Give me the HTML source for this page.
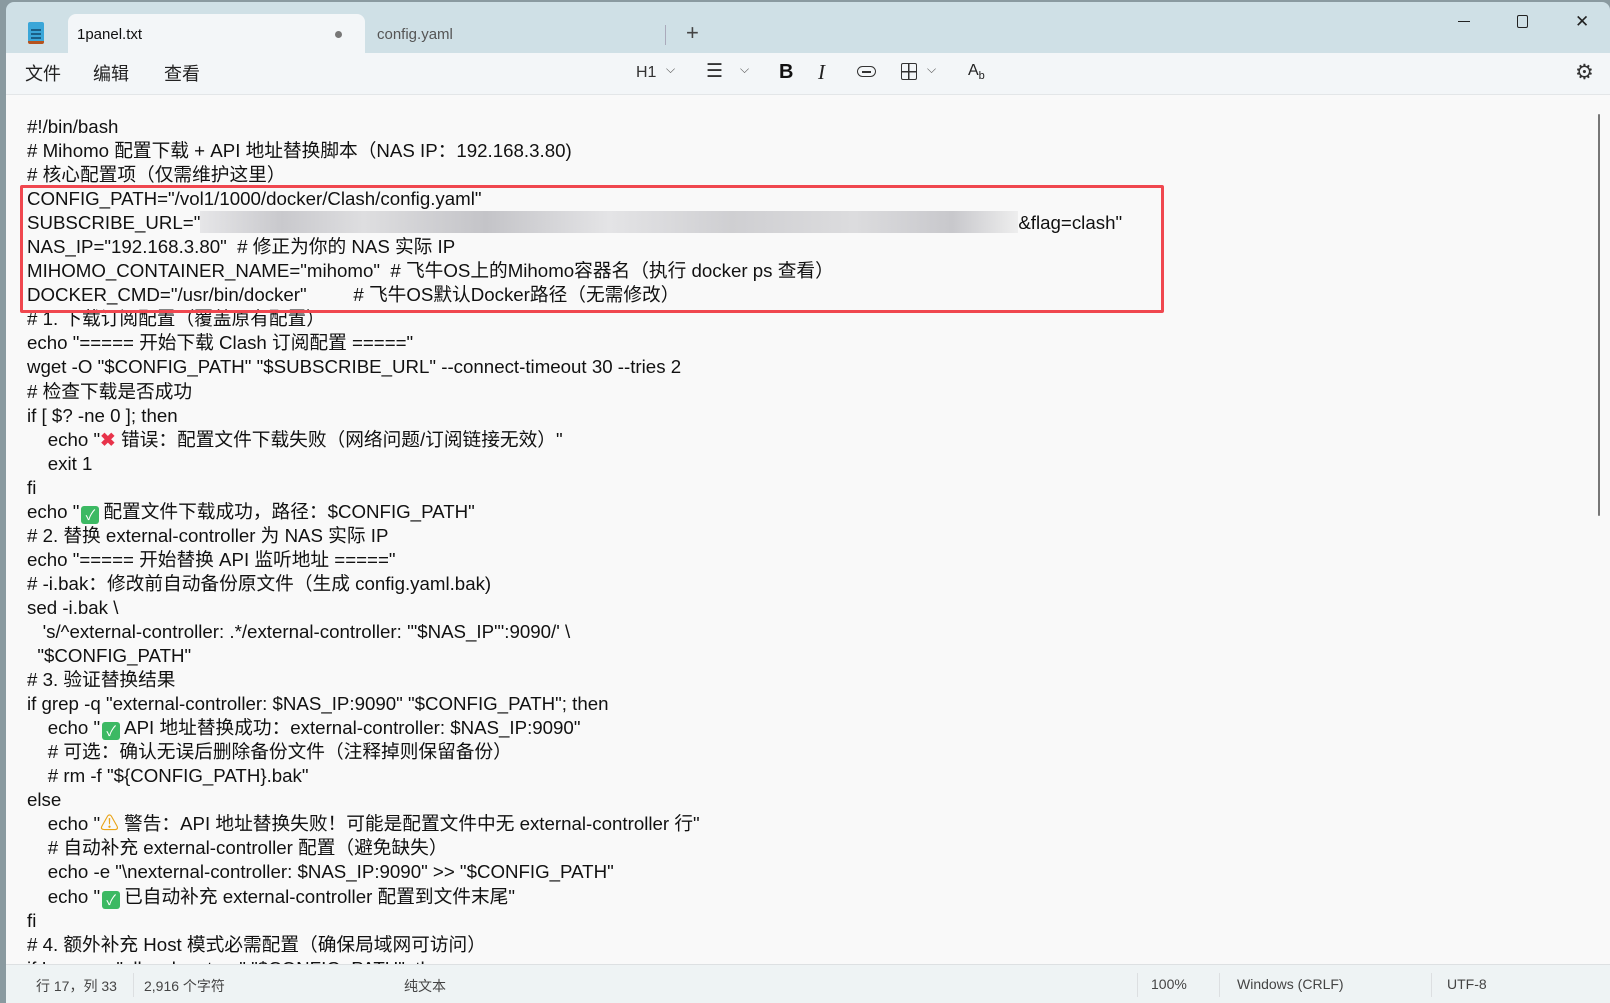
<!DOCTYPE html>
<html><head><meta charset="utf-8"><style>
*{margin:0;padding:0;box-sizing:border-box}
body{width:1610px;height:1003px;overflow:hidden;background:#8a9aa0;font-family:"Liberation Sans","Noto Sans CJK SC",sans-serif;position:relative}
.win{position:absolute;left:6px;top:2px;width:1604px;height:1001px;background:#cfe0e6;border-radius:8px 8px 0 0;overflow:hidden}
.abs{position:absolute}
.tab{left:62px;top:12px;width:297px;height:40px;background:#f3f6f8;border-radius:8px 8px 0 0}
.tool{left:0;top:51px;width:1604px;height:42px;background:#f3f6f8;border-bottom:1px solid #e3e6e8}
.edit{left:0;top:93px;width:1604px;height:870px;background:#f9f9f9}
.status{left:0;top:962px;width:1604px;height:40px;background:#eef3f4;border-top:1px solid #dde0e2;font-size:14px;color:#444}
.status span{position:absolute;top:11px}
.status i{position:absolute;top:8px;width:1px;height:24px;background:#dcdfe1}
.txt{left:21px;top:113px;font-size:18.7px;line-height:24.05px;color:#111;white-space:pre}
.menu{font-size:18px;color:#222;top:7px}
.red{left:14px;top:183px;width:1144px;height:128px;border:3px solid #f0474f;border-radius:2px}
.blur{display:inline-block;width:818px;height:22px;vertical-align:-4px;background:linear-gradient(90deg,#e6e6e8,#c9c9cd 10%,#dedee0 20%,#c4c4c8 35%,#e4e4e6 50%,#cfcfd2 65%,#dcdcde 80%,#c8c8cc 92%,#eee)}
.emo{display:inline-block;width:18px;height:18px;border-radius:3px;background:#3cb963;color:#fff;font-size:14px;text-align:center;line-height:18px;vertical-align:-2px;margin:0 4px 0 2px}
</style></head><body>
<div class="win">
 <div class="abs" style="left:22px;top:20px;width:16px;height:22px;background:#3aa6d8;border-bottom:3px solid #b5531e;border-radius:2px"></div>
 <div class="abs" style="left:25px;top:27px;width:10px;height:2px;background:#1b5f86;box-shadow:0 4px #1b5f86,0 8px #1b5f86"></div>
 <div class="abs tab"></div>
 <div class="abs" style="left:71px;top:24px;font-size:15px;color:#111">1panel.txt</div>
 <div class="abs" style="left:329px;top:29px;width:7px;height:7px;border-radius:50%;background:#777"></div>
 <div class="abs" style="left:371px;top:24px;font-size:15px;color:#555">config.yaml</div>
 <div class="abs" style="left:659px;top:23px;width:1px;height:20px;background:#aab"></div>
 <div class="abs" style="left:680px;top:18px;font-size:22px;color:#444">+</div>
 <div class="abs" style="left:1452px;top:19px;width:12px;height:1px;background:#222"></div>
 <div class="abs" style="left:1511px;top:13px;width:11px;height:13px;border:1.3px solid #222;border-radius:2px"></div>
 <div class="abs" style="left:1569px;top:10px;font-size:17px;color:#222;font-weight:300">✕</div>
 <div class="abs tool">
  <span class="abs menu" style="left:19px">文件</span>
  <span class="abs menu" style="left:87px">编辑</span>
  <span class="abs menu" style="left:158px">查看</span>
  <span class="abs" style="left:630px;top:11px;font-size:16px;color:#333">H1</span>
  <span class="abs" style="left:660px;top:9px;font-size:12px;color:#555">⌵</span>
  <span class="abs" style="left:700px;top:7px;font-size:19px;color:#333">☰</span>
  <span class="abs" style="left:734px;top:9px;font-size:12px;color:#555">⌵</span>
  <span class="abs" style="left:773px;top:8px;font-size:20px;font-weight:bold;color:#111">B</span>
  <span class="abs" style="left:812px;top:7px;font-size:21px;font-style:italic;font-family:'Liberation Serif',serif;color:#222">I</span>
  <span class="abs" style="left:851px;top:13px;width:19px;height:11px;border:1.5px solid #333;border-radius:6px"></span>
  <span class="abs" style="left:856px;top:18px;width:9px;height:1.5px;background:#333"></span>
  <span class="abs" style="left:895px;top:10px;width:16px;height:17px;border:1.5px solid #333;border-radius:2px;background:linear-gradient(#333,#333) 50% 0/1.5px 100% no-repeat,linear-gradient(#333,#333) 0 50%/100% 1.5px no-repeat"></span>
  <span class="abs" style="left:921px;top:9px;font-size:12px;color:#555">⌵</span>
  <span class="abs" style="left:962px;top:9px;font-size:16px;color:#222">A<sub style="font-size:11px">b</sub></span>
  <span class="abs" style="left:1569px;top:7px;font-size:21px;color:#333">⚙</span>
 </div>
 <div class="abs edit"></div>
 <div class="abs" style="left:1592px;top:112px;width:2px;height:402px;background:#777;border-radius:1px"></div>
 <div class="abs txt">#!/bin/bash
# Mihomo 配置下载 + API 地址替换脚本（NAS IP：192.168.3.80)
# 核心配置项（仅需维护这里）
CONFIG_PATH="/vol1/1000/docker/Clash/config.yaml"
SUBSCRIBE_URL="<span class="blur"></span>&amp;flag=clash"
NAS_IP="192.168.3.80"  # 修正为你的 NAS 实际 IP
MIHOMO_CONTAINER_NAME="mihomo"  # 飞牛OS上的Mihomo容器名（执行 docker ps 查看）
DOCKER_CMD="/usr/bin/docker"         # 飞牛OS默认Docker路径（无需修改）
# 1. 下载订阅配置（覆盖原有配置）
echo "===== 开始下载 Clash 订阅配置 ====="
wget -O "$CONFIG_PATH" "$SUBSCRIBE_URL" --connect-timeout 30 --tries 2
# 检查下载是否成功
if [ $? -ne 0 ]; then
    echo "<span style="color:#e8334a;font-weight:bold">✖</span> 错误：配置文件下载失败（网络问题/订阅链接无效）"
    exit 1
fi
echo "<span class="emo">✓</span>配置文件下载成功，路径：$CONFIG_PATH"
# 2. 替换 external-controller 为 NAS 实际 IP
echo "===== 开始替换 API 监听地址 ====="
# -i.bak：修改前自动备份原文件（生成 config.yaml.bak)
sed -i.bak \
   's/^external-controller: .*/external-controller: '"$NAS_IP"':9090/' \
  "$CONFIG_PATH"
# 3. 验证替换结果
if grep -q "external-controller: $NAS_IP:9090" "$CONFIG_PATH"; then
    echo "<span class="emo">✓</span>API 地址替换成功：external-controller: $NAS_IP:9090"
    # 可选：确认无误后删除备份文件（注释掉则保留备份）
    # rm -f "${CONFIG_PATH}.bak"
else
    echo "<span style="color:#e9a418">⚠</span> 警告：API 地址替换失败！可能是配置文件中无 external-controller 行"
    # 自动补充 external-controller 配置（避免缺失）
    echo -e "\nexternal-controller: $NAS_IP:9090" &gt;&gt; "$CONFIG_PATH"
    echo "<span class="emo">✓</span>已自动补充 external-controller 配置到文件末尾"
fi
# 4. 额外补充 Host 模式必需配置（确保局域网可访问）
if ! grep -q "allow-lan: true" "$CONFIG_PATH"; then</div>
 <div class="abs red"></div>
 <div class="abs status">
  <span style="left:30px">行 17，列 33</span><i style="left:127px"></i>
  <span style="left:138px">2,916 个字符</span>
  <span style="left:398px">纯文本</span><i style="left:1131px"></i>
  <span style="left:1145px">100%</span><i style="left:1213px"></i>
  <span style="left:1231px">Windows (CRLF)</span><i style="left:1425px"></i>
  <span style="left:1441px">UTF-8</span>
 </div>
</div>
</body></html>
